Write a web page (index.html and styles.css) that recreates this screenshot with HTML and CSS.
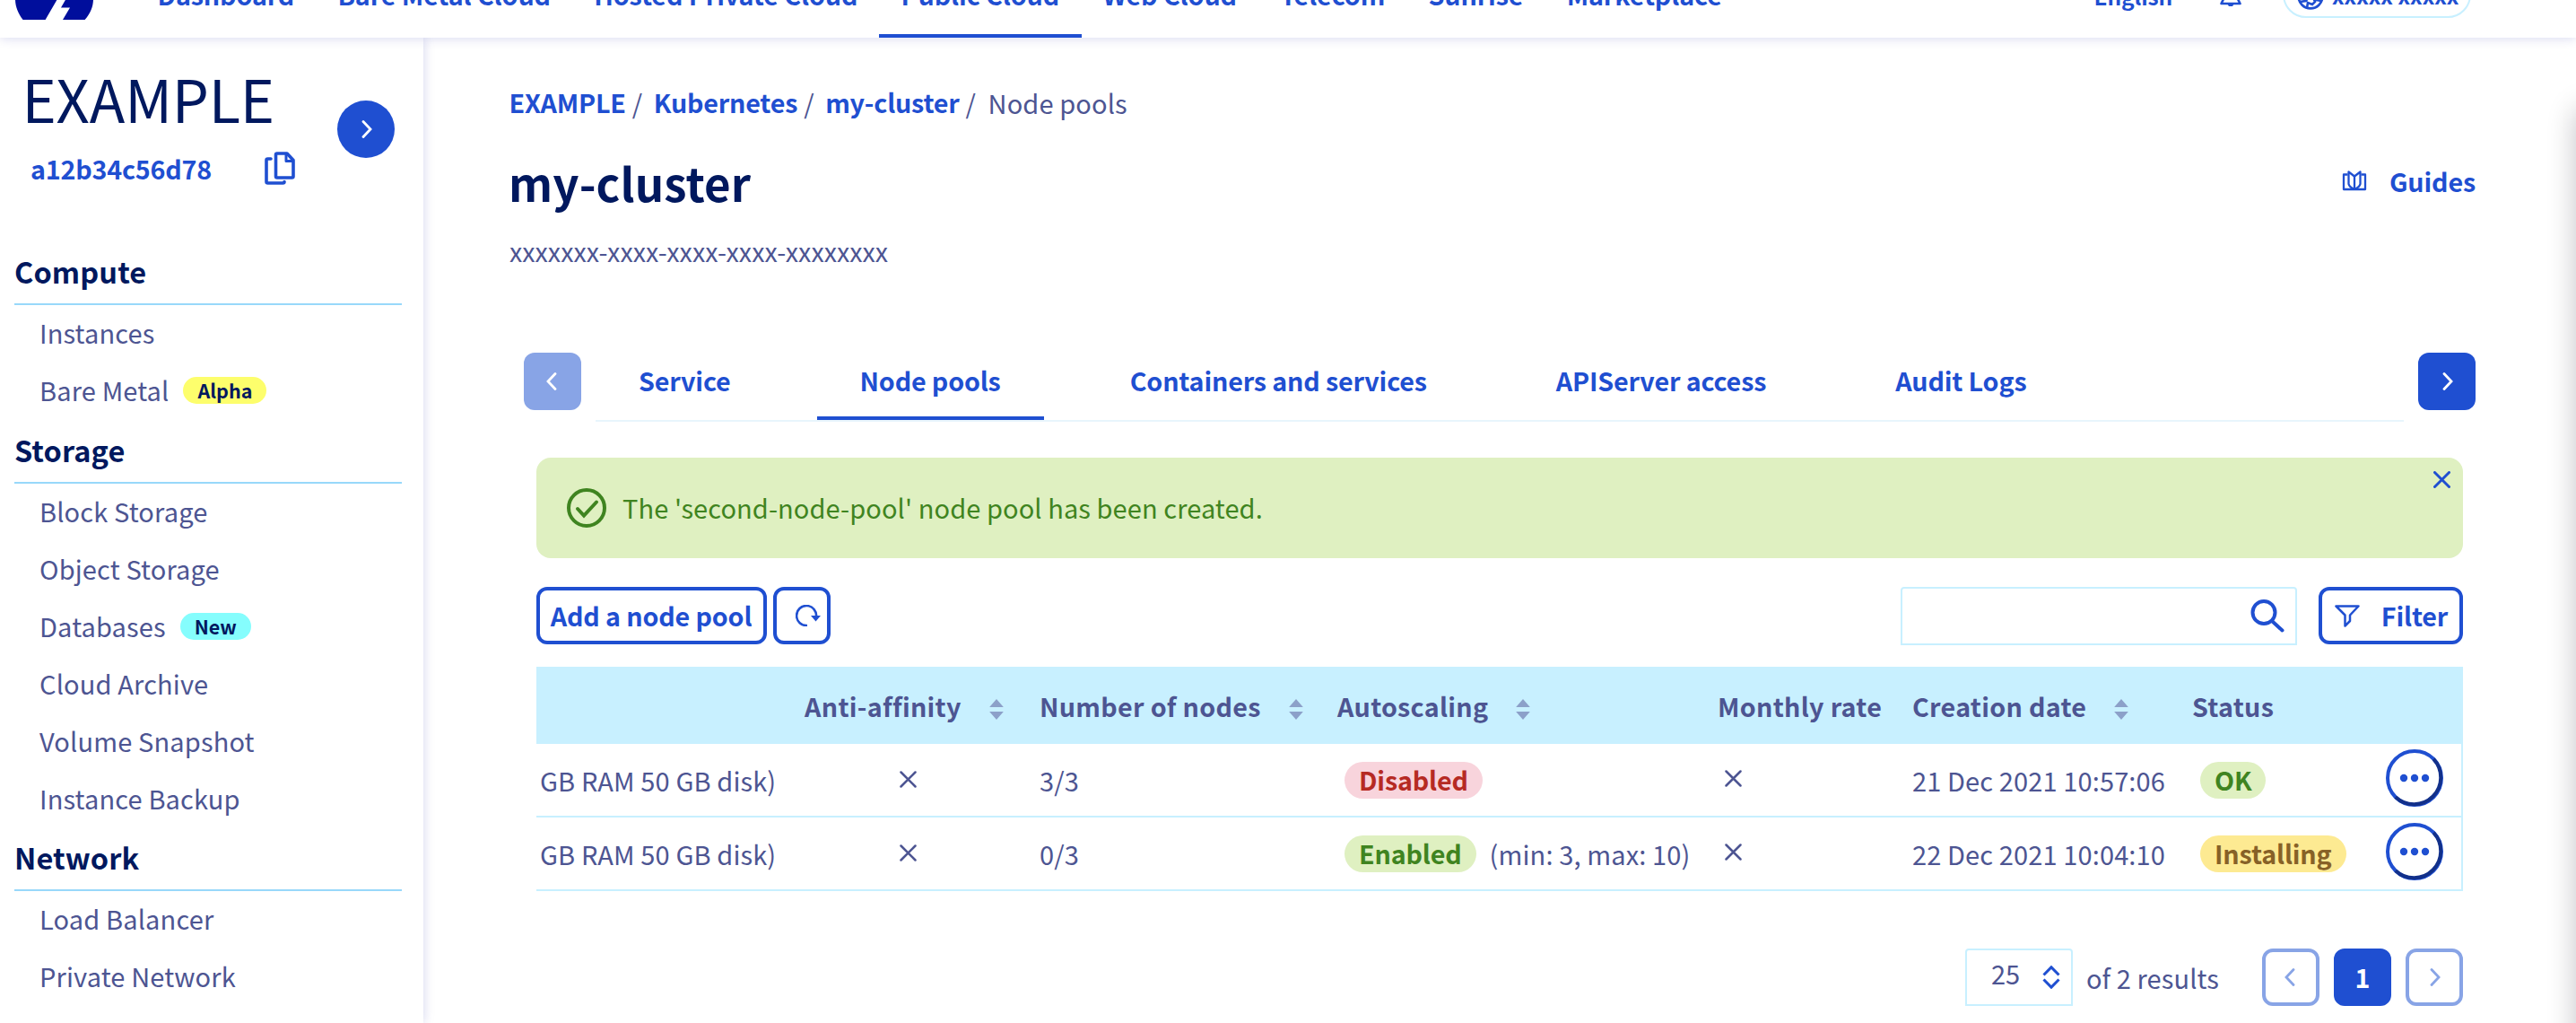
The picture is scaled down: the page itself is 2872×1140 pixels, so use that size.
FILE: index.html
```html
<!DOCTYPE html>
<html lang="en">
<head>
<meta charset="utf-8">
<title>my-cluster – Node pools</title>
<link rel="stylesheet" href="styles.css">
</head>
<body>
<header class="topbar">
  <svg class="logo" width="87" height="48" viewBox="0 0 87 48"><path d="M8.600 48C3 41 0 33 0 25C0 16 4 6 10 -2L30 -2L51 18L33.600 48ZM53 48L61 34.500H51L72 -2L77 -2C84 6 87 16 87 25C87 33 84 41 77.600 48Z"/></svg>
  <nav class="topnav">
    <a>Dashboard</a><a>Bare Metal Cloud</a><a>Hosted Private Cloud</a><a class="active">Public Cloud</a><a>Web Cloud</a><a>Telecom</a><a>Sunrise</a><a>Marketplace</a>
  </nav>
  <div class="top-tools">
    <a class="lang">English</a>
    <svg class="bell" width="24" height="28" viewBox="0 0 24 28"><path d="M4 20V11a8 8 0 0 1 16 0v9l2.500 5h-21z" fill="none" stroke="currentColor" stroke-width="2.600" stroke-linejoin="round"/><path d="M8 25h8l-2 3h-4z" fill="currentColor"/></svg>
    <div class="account">
      <svg width="30" height="30" viewBox="0 0 30 30" fill="none" stroke="currentColor" stroke-width="2.600"><circle cx="15" cy="15" r="13.400"/><path d="M3 21l7-1 3-5 5 1 2 5-3 3-5-2-1 6M27 20l-5-1-2-4M8 3l3 6-6 5"/></svg>
      <span>xxxxx xxxxx</span>
    </div>
  </div>
</header>
<div class="page">
  <aside class="sidebar">
    <div class="project">
      <div class="project-info">
        <div class="project-name">EXAMPLE</div>
        <div class="project-id"><span>a12b34c56d78</span>
          <svg width="34" height="37" viewBox="0 0 34 37" fill="none" stroke="currentColor" stroke-width="3.600" stroke-linejoin="round" stroke-linecap="round"><path d="M13.500 2H25L32 9.500V27.500Q32 29 30.500 29H14Q12.500 29 12.500 27.500V3.500Q12.500 2 14 2Z"/><path d="M24 3V10.500H31" stroke-width="3"/><path d="M7 8H3.500Q2 8 2 9.500V33.500Q2 35 3.500 35H20.500Q22 35 22 33.500"/></svg>
        </div>
      </div>
      <button class="round-toggle"><svg width="14" height="20" viewBox="0 0 14 20"><path d="M4 1.500l8 8.500-8 8.500"/></svg></button>
    </div>
    <section class="menu">
      <h2>Compute</h2>
      <a>Instances</a>
      <a>Bare Metal<span class="tag alpha">Alpha</span></a>
    </section>
    <section class="menu">
      <h2>Storage</h2>
      <a>Block Storage</a>
      <a>Object Storage</a>
      <a>Databases<span class="tag new">New</span></a>
      <a>Cloud Archive</a>
      <a>Volume Snapshot</a>
      <a>Instance Backup</a>
    </section>
    <section class="menu">
      <h2>Network</h2>
      <a>Load Balancer</a>
      <a>Private Network</a>
    </section>
  </aside>
  <main class="content">
    <nav class="breadcrumb"><a>EXAMPLE</a><i>/</i><a>Kubernetes</a><i>/</i><a>my-cluster</a><i>/</i><span>Node pools</span></nav>
    <div class="title-row">
      <h1>my-cluster</h1>
      <a class="guides"><svg width="28" height="24" viewBox="0 0 28 24" fill="none" stroke="currentColor" stroke-width="2.300" stroke-linejoin="round"><path d="M6.500 5.500H2V22H26V5.500H21.500"/><path d="M14 7.500L7.500 2.500V16Q8.500 20 14 21.500Q19.500 20 20.500 16V2.500Z"/><path d="M14 7V22"/></svg>Guides</a>
    </div>
    <p class="uuid">xxxxxxx-xxxx-xxxx-xxxx-xxxxxxxx</p>
    <div class="tabs-row">
      <button class="square dim"><svg width="14" height="20" viewBox="0 0 14 20"><path d="M10 1.500l-8 8.500 8 8.500"/></svg></button>
      <div class="tabs"><a>Service</a><a class="active">Node pools</a><a>Containers and services</a><a>APIServer access</a><a>Audit Logs</a></div>
      <button class="square"><svg width="14" height="20" viewBox="0 0 14 20"><path d="M4 1.500l8 8.500-8 8.500"/></svg></button>
    </div>
    <div class="panel">
      <div class="alert">
        <svg width="44" height="44" viewBox="0 0 44 44" fill="none" stroke="currentColor" stroke-width="4"><circle cx="22" cy="22" r="20"/><path d="M12 23l7 7.500L33 15.500" stroke-linecap="round"/></svg>
        <span>The 'second-node-pool' node pool has been created.</span>
        <svg class="close" width="19" height="19" viewBox="0 0 19 19"><path d="M1.500 1.500l16 16M17.500 1.500l-16 16" stroke="currentColor" stroke-width="3" stroke-linecap="round"/></svg>
      </div>
      <div class="toolbar">
        <button class="outline add">Add a node pool</button>
        <button class="outline refresh"><svg width="28" height="24" viewBox="0 0 28 24"><path d="M13 23A11 11 0 1 1 23 13.500" fill="none" stroke="currentColor" stroke-width="2.600"/><path d="M17 12h11l-5.500 6.500z" fill="currentColor"/></svg></button>
        <div class="search"><svg width="38" height="37" viewBox="0 0 38 37" fill="none" stroke="currentColor" stroke-width="4"><circle cx="15" cy="14.500" r="12.500"/><path d="M24 24L35.500 34.500" stroke-linecap="round"/></svg></div>
        <button class="outline filter"><svg width="28" height="25" viewBox="0 0 28 25" fill="none" stroke="currentColor" stroke-width="2.500" stroke-linejoin="round"><path d="M1.500 1.500H26.500L17 11.500V18L11.500 23.500V11.500Z"/></svg>Filter</button>
      </div>
      <div class="table">
        <div class="row head">
          <span></span>
          <span>Anti-affinity<svg class="sort" viewBox="0 0 15 22"><path d="M7.500 0L15 8.500H0zM0 13.500H15L7.500 22z"/></svg></span>
          <span>Number of nodes<svg class="sort" viewBox="0 0 15 22"><path d="M7.500 0L15 8.500H0zM0 13.500H15L7.500 22z"/></svg></span>
          <span>Autoscaling<svg class="sort" viewBox="0 0 15 22"><path d="M7.500 0L15 8.500H0zM0 13.500H15L7.500 22z"/></svg></span>
          <span>Monthly rate</span>
          <span>Creation date<svg class="sort" viewBox="0 0 15 22"><path d="M7.500 0L15 8.500H0zM0 13.500H15L7.500 22z"/></svg></span>
          <span>Status</span>
          <span></span>
        </div>
        <div class="row">
          <span class="flavor">GB RAM 50 GB disk)</span>
          <span class="anti"><svg class="cross" viewBox="0 0 19 19"><path d="M1.500 1.500l16 16M17.500 1.500l-16 16"/></svg></span>
          <span>3/3</span>
          <span class="auto"><b class="pill red">Disabled</b></span>
          <span class="monthly"><svg class="cross" viewBox="0 0 19 19"><path d="M1.500 1.500l16 16M17.500 1.500l-16 16"/></svg></span>
          <span>21 Dec 2021 10:57:06</span>
          <span class="status"><b class="pill green">OK</b></span>
          <span class="actions"><svg width="64" height="64" viewBox="0 0 64 64"><circle class="ring" cx="32" cy="32" r="30"/><path class="ring-dark" d="M53.200 10.800A30 30 0 0 1 10.800 53.200"/><circle cx="20" cy="32" r="4.200"/><circle cx="32" cy="32" r="4.200"/><circle cx="44" cy="32" r="4.200"/></svg></span>
        </div>
        <div class="row">
          <span class="flavor">GB RAM 50 GB disk)</span>
          <span class="anti"><svg class="cross" viewBox="0 0 19 19"><path d="M1.500 1.500l16 16M17.500 1.500l-16 16"/></svg></span>
          <span>0/3</span>
          <span class="auto"><b class="pill green">Enabled</b>(min: 3, max: 10)</span>
          <span class="monthly"><svg class="cross" viewBox="0 0 19 19"><path d="M1.500 1.500l16 16M17.500 1.500l-16 16"/></svg></span>
          <span>22 Dec 2021 10:04:10</span>
          <span class="status"><b class="pill yellow">Installing</b></span>
          <span class="actions"><svg width="64" height="64" viewBox="0 0 64 64"><circle class="ring" cx="32" cy="32" r="30"/><path class="ring-dark" d="M53.200 10.800A30 30 0 0 1 10.800 53.200"/><circle cx="20" cy="32" r="4.200"/><circle cx="32" cy="32" r="4.200"/><circle cx="44" cy="32" r="4.200"/></svg></span>
        </div>
      </div>
      <div class="pagination">
        <div class="select"><span>25</span><svg width="20" height="26" viewBox="0 0 20 26"><path d="M1.500 10.500L10 1.800l8.500 8.700M1.500 15.500L10 24.200l8.500-8.700"/></svg></div>
        <span class="results">of 2 results</span>
        <button class="page-btn"><svg width="14" height="20" viewBox="0 0 14 20"><path d="M10 1.500l-8 8.500 8 8.500"/></svg></button>
        <button class="page-btn current">1</button>
        <button class="page-btn"><svg width="14" height="20" viewBox="0 0 14 20"><path d="M4 1.500l8 8.500-8 8.500"/></svg></button>
      </div>
    </div>
  </main>
</div>
<div class="drawer"></div>
</body>
</html>
```
FILE: styles.css
```css
* { box-sizing: border-box; }
:root { --blue: #1f4fd1; --navy: #00185e; --slate: #4d5592; --ice: #c8f0ff; }
body {
  margin: 0; height: 1140px; position: relative; overflow: hidden; background: #fff;
  font-family: "Noto Sans CJK SC", "Noto Sans", sans-serif;
  font-size: 29px; letter-spacing: .12px; line-height: 40px; color: var(--slate);
}
svg { display: block; flex: none; }
button { font: inherit; margin: 0; padding: 0; border: 0; background: none; display: flex; align-items: center; justify-content: center; }
a, button { font-size: 28.7px; font-weight: 700; letter-spacing: -.14px; color: var(--blue); white-space: nowrap; }

.topbar {
  height: 42px; display: flex; align-items: flex-end; overflow: hidden; padding-left: 17px;
  position: relative; z-index: 2; background: #fff; box-shadow: 0 0 12px rgba(0, 14, 156, .18);
}
.logo { fill: #000e9c; margin-bottom: 20px; }
.topnav { display: flex; margin-left: 47px; }
.topnav a { padding: 0 24.500px; margin-right: -.8px; padding-bottom: 30px; line-height: 29px; border-bottom: 4px solid transparent; letter-spacing: -.1px; }
.topnav a.active { border-color: var(--blue); }
.top-tools { margin-left: auto; margin-right: 117px; display: flex; align-items: flex-end; color: var(--blue); }
.lang { font-size: 24.500px; line-height: 29px; padding-bottom: 32px; }
.bell { margin: 0 46px 35px 53px; }
.account { width: 210px; height: 52px; margin-bottom: 22px; border: 2px solid var(--ice); border-radius: 26px; display: flex; gap: 9px; padding-left: 14px; align-items: center; font-size: 24.200px; font-weight: 700; line-height: 29px; }
.account svg { margin-top: 3px; }
.account span { white-space: nowrap; letter-spacing: 0; margin-top: 1px; }

.page { display: flex; height: 1098px; }
.sidebar { width: 472px; flex: none; padding: 0 24px 0 16px; box-shadow: 0 0 12px rgba(0, 14, 156, .18); }
.project { display: flex; align-items: flex-start; height: 227px; }
.project-info { width: 360px; padding-top: 26.700px; }
.project-name { font-size: 65px; line-height: 80px; color: var(--navy); letter-spacing: -.2px; margin-left: 8.500px; }
.project-id { display: flex; align-items: center; justify-content: space-between; padding-left: 18px; margin-top: 19px; width: 313px; font-size: 28.7px; font-weight: 700; color: var(--blue); letter-spacing: -.2px; }
.round-toggle { width: 64px; height: 64px; border-radius: 50%; background: var(--blue); margin-top: 70px; }
.round-toggle path, .square path, .page-btn path { fill: none; stroke: currentColor; stroke-width: 2.800; stroke-linecap: round; }
.round-toggle, .square { color: #fff; }
.menu { margin-bottom: 2px; }
.menu + .menu { margin-bottom: 1px; }
.menu h2 { margin: 0 0 -2px; height: 71px; padding-top: 10px; font-size: 32.500px; line-height: 46px; color: var(--navy); border-bottom: 2px solid #98d8fa; letter-spacing: .1px; }
.menu a { display: flex; align-items: center; height: 64px; padding-left: 28px; font-size: 29px; font-weight: 400; letter-spacing: .15px; color: var(--slate); }
.tag { height: 30px; line-height: 29px; border-radius: 15px; padding: 0 16px; margin: 2px 0 0 16px; font-size: 21.500px; font-weight: 700; letter-spacing: 0; color: var(--navy); }
.alpha { background: #fdfe6c; }
.new { background: #85fdfd; }

.content { flex: 1; padding: 51.500px 112px 0 96px; }
.breadcrumb { display: flex; }
.breadcrumb a { letter-spacing: -.2px; margin-left: -1px; }
.breadcrumb a:first-child { margin-left: -.5px; }
.breadcrumb i { font-style: normal; margin: 0 13.500px 0 7px; }
.title-row { display: flex; justify-content: space-between; margin-top: 39px; height: 60px; }
h1 { margin: 0 0 0 -1px; font-size: 51px; line-height: 60px; letter-spacing: .1px; color: var(--navy); }
.guides { display: flex; align-items: center; gap: 25px; line-height: 57px; height: 57px; }
.uuid { margin: 27px 0 0; font-size: 28.7px; letter-spacing: 0; }
.tabs-row { display: flex; align-items: flex-start; margin: 93.500px 0 0 16px; }
.square { width: 64px; height: 64px; border-radius: 12px; background: var(--blue); flex: none; }
.dim { background: #88a4e6; }
.tabs { flex: 1; margin: 0 16px; height: 77px; display: flex; gap: 48px; border-bottom: 2px solid #e8f5fc; }
.tabs a { height: 75px; padding: 0 48px; line-height: 61px; border-bottom: 4px solid transparent; letter-spacing: -.16px; }
.tabs a.active { border-color: var(--blue); }

.panel { padding: 40px 14px 0 30px; }
.alert { position: relative; height: 112px; border-radius: 16px; background: #dff0c1; color: #3f8420; display: flex; align-items: center; gap: 18px; padding-left: 34px; }
.alert span { margin-top: -2px; letter-spacing: .09px; }
.alert .close { position: absolute; top: 15px; right: 14px; color: var(--blue); }
.toolbar { display: flex; height: 65px; margin-top: 32px; }
.outline { height: 64px; border: 4px solid var(--blue); border-radius: 12px; }
.add { width: 257px; padding-right: 1px; }
.refresh { width: 64px; margin-left: 7px; padding-left: 14px; }
.search { width: 442px; height: 65px; margin-left: auto; border: 2px solid var(--ice); border-radius: 4px 4px 0 0; display: flex; justify-content: flex-end; padding: 12px 12px 0 0; color: var(--blue); }
.filter { width: 161px; margin-left: 24px; gap: 24px; padding-left: 1px; }

.table { margin-top: 24px; border-right: 2px solid var(--ice); }
.row { display: grid; grid-template-columns: 299px 262px 332px 424px 217px 312px 215px 1fr; height: 82px; border-bottom: 2px solid var(--ice); white-space: nowrap; }
.row > span { display: flex; align-items: center; padding-bottom: 1px; }
.head { height: 86px; border: 0; background: var(--ice); font-size: 28.7px; font-weight: 700; letter-spacing: .3px; }
.row.head > span { padding: 1px 0 0; }
.sort { width: 16px; height: 23px; margin: 7px 0 0 31px; fill: #8ca0c9; }
.row .flavor { padding-left: 4px; }
.row .anti { padding-left: 106px; }
.cross { width: 19px; height: 19px; fill: none; stroke: currentColor; stroke-width: 2.500; stroke-linecap: round; }
.row .auto { padding-left: 8px; gap: 15px; }
.row .monthly { padding: 0 0 4px 8px; }
.row .status { padding-left: 9px; }
.pill { height: 41px; line-height: 39px; margin-top: 2px; padding: 0 16px; border-radius: 20.500px; font-size: 28.7px; letter-spacing: -.15px; }
.red { background: #f8d4dc; color: #b62a23; }
.green { background: #dff0c1; color: #3f8420; }
.yellow { background: #fdea92; color: #876127; }
.row .actions { padding-bottom: 4px; }
.actions svg { margin-left: 1px; fill: var(--blue); }
.actions .ring { fill: none; stroke: var(--blue); stroke-width: 4; }
.actions .ring-dark { fill: none; stroke: #12308a; stroke-width: 4; }

.pagination { display: flex; height: 64px; margin-top: 64px; justify-content: flex-end; align-items: center; }
.select { width: 120px; height: 64px; border: 2px solid var(--ice); border-radius: 4px 4px 0 0; display: flex; justify-content: space-between; padding: 0 12px 0 27px; align-items: center; }
.select span { margin-top: -10px; }
.select path { fill: none; stroke: var(--blue); stroke-width: 3; }
.results { margin: -1px 48px 0 15px; }
.page-btn { width: 64px; height: 64px; margin-left: 16px; border: 4px solid #88a4e6; border-radius: 12px; color: #88a4e6; }
.results + .page-btn { margin-left: 0; }
.current { background: var(--blue); border-color: var(--blue); color: #fff; }
.drawer { position: absolute; left: 100%; top: 122px; bottom: -40px; width: 60px; box-shadow: 0 0 32px rgba(0, 0, 20, .24); }
```
